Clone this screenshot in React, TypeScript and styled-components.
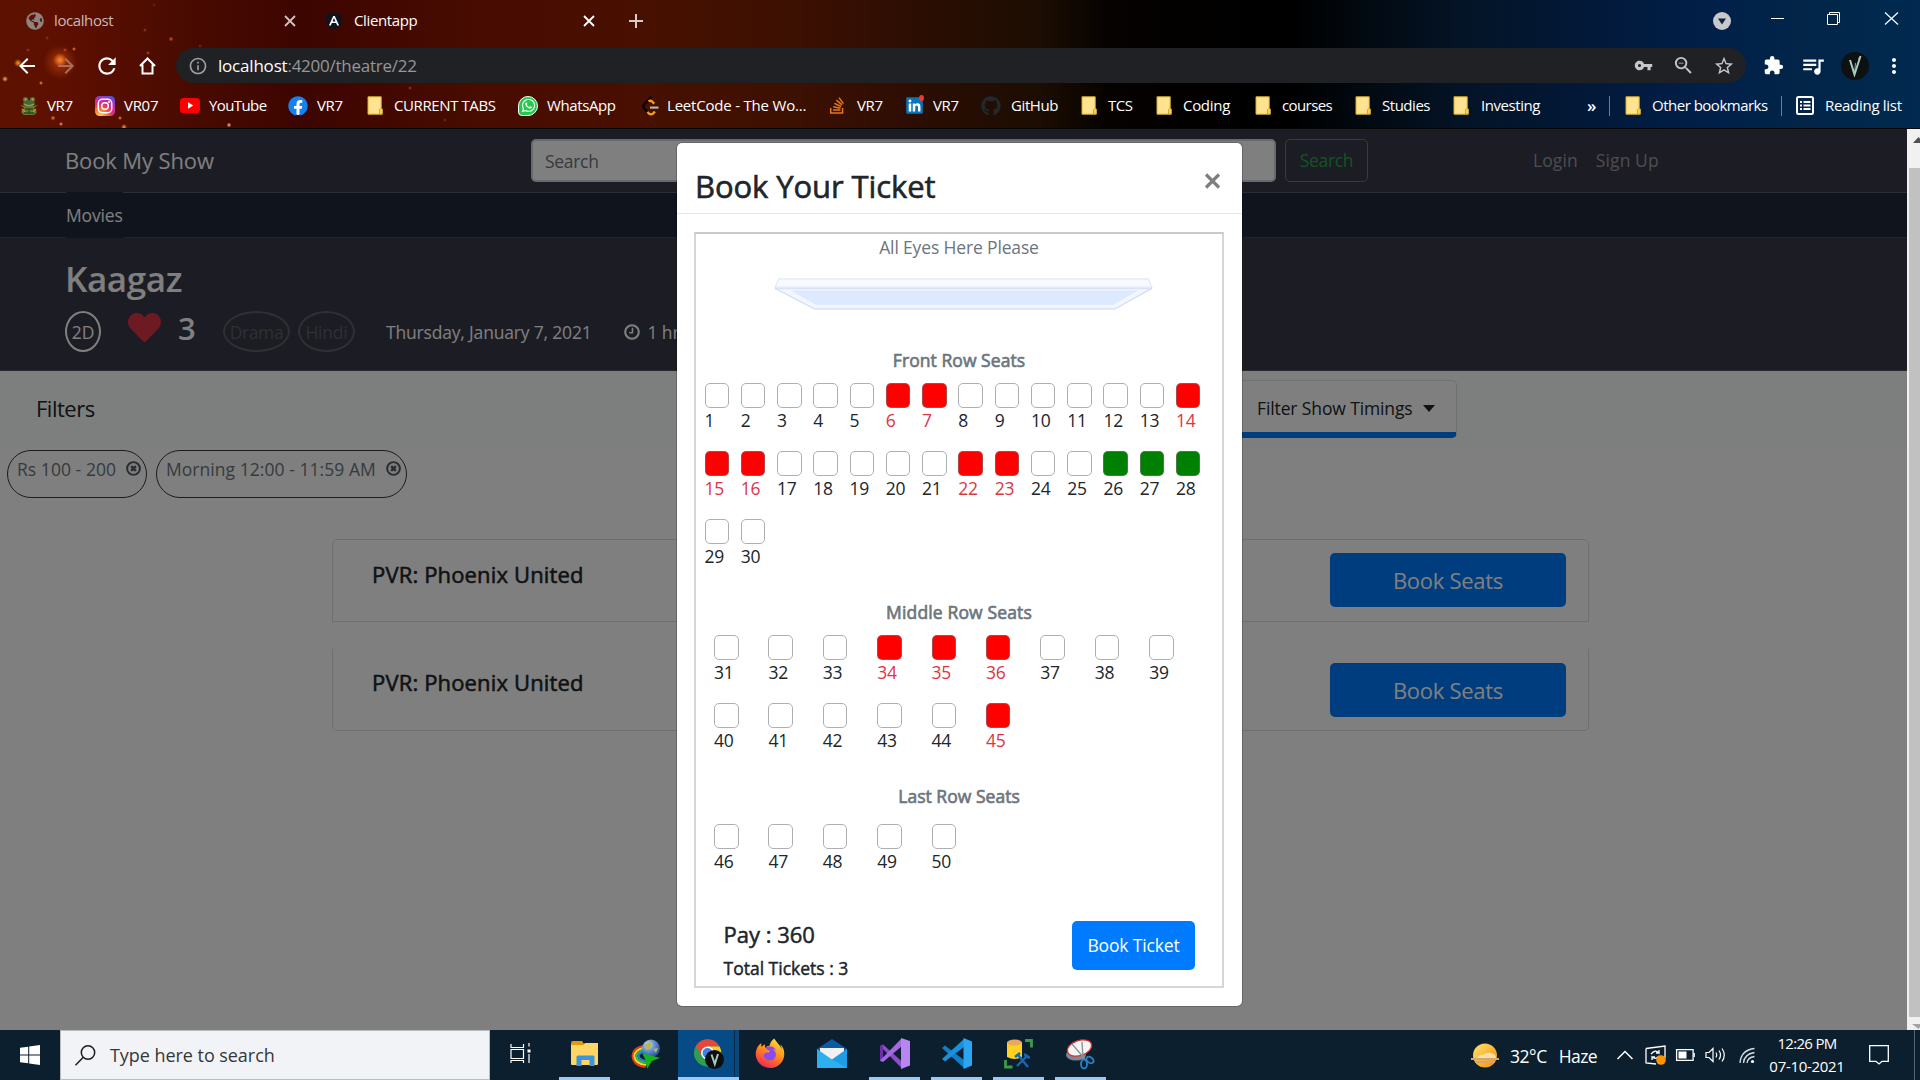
import React from 'react';
import styled, { createGlobalStyle, css } from 'styled-components';
import {
  FaAngular, FaFacebook, FaFirefoxBrowser, FaGithub, FaGlobeAmericas, FaHeart, FaLinkedin, FaStackOverflow, FaWhatsapp,
} from 'react-icons/fa';
import {
  MdArrowBack, MdArrowForward, MdExtension, MdInfoOutline, MdMoreVert, MdQueueMusic, MdRefresh, MdStarBorder, MdVpnKey, MdZoomOut,
} from 'react-icons/md';

const GlobalStyle = createGlobalStyle`
  * { box-sizing: border-box; }
  body { margin: 0; overflow: hidden; background: #000; }
  button { font: inherit; }
`;

const Desktop = styled.div`
  display: flex;
  flex-direction: column;
  width: 1920px;
  height: 1080px;
  font-family: "Open Sans", "Noto Sans", sans-serif;
  line-height: 1;
`;

const Label = styled.span<{ $size?: number; $ls?: number; $color?: string; $medium?: number; $weight?: number }>`
  font-size: ${p => p.$size ?? 17.5}px;
  letter-spacing: ${p => p.$ls ?? -0.15}px;
  color: ${p => p.$color ?? 'inherit'};
  font-weight: ${p => p.$weight ?? 400};
  white-space: nowrap;
  ${p => p.$medium && css`-webkit-text-stroke: ${p.$medium}px currentColor;`}
`;

const Icon = styled.span<{ $w: number; $h?: number; $color?: string; $ml?: number }>`
  display: flex;
  flex: none;
  width: ${p => p.$w}px;
  height: ${p => p.$h ?? p.$w}px;
  margin-left: ${p => p.$ml ?? 0}px;
  color: ${p => p.$color ?? '#fff'};
  > svg { width: 100%; height: 100%; overflow: visible; }
`;

/* ---------- browser window ---------- */

const embers: [number, number, number, string][] = [
  [60, 60, 7, '#ff8a2a'], [60, 62, 17, '#a8330a'], [18, 63, 4, '#ff9a20'], [5, 79, 3, '#ffb050'], [41, 83, 2, '#f0a040'],
  [74, 49, 2, '#f09030'], [65, 50, 2, '#c86020'], [148, 53, 2, '#c05010'], [171, 39, 2.5, '#d06010'], [145, 30, 2, '#a04010'],
  [53, 118, 2.5, '#ff8020'], [61, 124, 2, '#ffb0a0'], [120, 118, 2, '#f0a030'], [124, 127, 3, '#ffa030'], [229, 125, 2.5, '#ffc080'],
  [154, 5, 2, '#7a2008'], [47, 38, 2, '#a03010'], [28, 50, 2, '#a04010'], [200, 46, 2, '#802808'], [410, 88, 2, '#a04010'], [445, 120, 2, '#803010'],
];

const Chrome = styled.header`
  height: 129px;
  flex: none;
  display: flex;
  flex-direction: column;
  border-bottom: 1px solid #060606;
  color: #fff;
  background:
    ${embers.map(([x, y, r, c]) => `radial-gradient(circle at ${x}px ${y}px, ${c} 0, transparent ${r}px)`).join(',')},
    linear-gradient(90deg, #5c1200 0, #5e1000 60px, #4a0b00 180px, #3d0500 300px, #480c00 480px, #481000 640px, #3c1002 800px, #2c0d02 920px, #1c0d02 1040px, #050200 1110px, #000 1290px, #020b14 1380px, #041428 1470px, #02193a 1600px, #01204a 1720px, #022548 1800px, #012a50 1920px);
`;

const TabStrip = styled.div`
  display: flex;
  height: 48px;
`;

const Tab = styled.div<{ $w: number; $active?: boolean }>`
  display: flex;
  align-items: center;
  width: ${p => p.$w}px;
  height: 42px;
  color: ${p => (p.$active ? '#fff' : '#c9b8b4')};
`;

const TabTitle = styled.div`
  flex: 1;
  padding: 0 0 2px 10px;
`;

const Spacer = styled.div`
  flex: 1;
`;

const WindowControls = styled.div`
  display: flex;
  align-items: center;
  height: 42px;
  padding-right: 22px;
`;

const Toolbar = styled.div`
  display: flex;
  align-items: center;
  height: 35px;
  padding-left: 15px;
`;

const Omnibox = styled.div`
  display: flex;
  align-items: center;
  width: 1570px;
  height: 35px;
  margin-left: 20px;
  padding: 0 11px 0 12px;
  border-radius: 18px;
  background: #202124;
`;

const Url = styled.div`
  flex: 1;
  padding-left: 10px;
`;

const Avatar = styled.div`
  display: flex;
  align-items: center;
  justify-content: center;
  width: 28px;
  height: 28px;
  margin-left: 15px;
  border-radius: 50%;
  background: #0e1111;
  > svg { width: 14px; height: 22px; }
`;

const BookmarksBar = styled.nav`
  display: flex;
  align-items: center;
  height: 45px;
  padding-left: 19px;
`;

const Bookmark = styled.div<{ $w: number }>`
  display: flex;
  align-items: center;
  flex: none;
  width: ${p => p.$w}px;
`;

const BookmarkSlot = styled.div<{ $w: number }>`
  flex: none;
  width: ${p => p.$w - 1}px;
`;

const BarDivider = styled.div`
  width: 1px;
  height: 20px;
  margin-right: 15px;
  background: #6d7d92;
`;

const FolderIcon = () => (
  <Icon $w={16} $h={19}>
    <svg viewBox="0 0 16 19">
      <path d="M1 .8h13.2V12l1 1v5.2H1z" fill="#ffe391" stroke="#d9ad2a" strokeWidth="1" />
      <path d="M12.5 18v-4.5l1.5-1.2 1.4 1.2V18z" fill="#fbd25e" stroke="#c99a1c" strokeWidth=".8" />
    </svg>
  </Icon>
);

const FrogIcon = () => (
  <Icon $w={20}>
    <svg viewBox="0 0 20 20">
      <circle cx="6.5" cy="3.6" r="2.6" fill="#5b6f36" /><circle cx="13.5" cy="3.6" r="2.6" fill="#5b6f36" />
      <ellipse cx="10" cy="7.500" rx="6" ry="3.6" fill="#3f6a35" />
      <path d="M1 9l4 3-3 4 3 3h10l3-3-3-4 4-3-5 1H6z" fill="#66782f" />
      <path d="M5 8q5 3 10 0M3 13l3 3M17 13l-3 3" stroke="#c5923a" strokeWidth="1.200" fill="none" />
      <path d="M6 13h8M5 17h10M10 12v6" stroke="#2e4a22" strokeWidth="1.300" />
      <circle cx="6.5" cy="3.4" r="1" fill="#d8b050" /><circle cx="13.5" cy="3.4" r="1" fill="#d8b050" />
    </svg>
  </Icon>
);

const InstagramIcon = () => (
  <Icon $w={20}>
    <svg viewBox="0 0 20 20">
      <defs>
        <radialGradient id="insta" cx=".25" cy="1" r="1.1">
          <stop offset="0" stopColor="#ffd35a" /><stop offset=".3" stopColor="#fb7a2c" />
          <stop offset=".55" stopColor="#e0306e" /><stop offset=".8" stopColor="#b030b8" /><stop offset="1" stopColor="#5b50d8" />
        </radialGradient>
      </defs>
      <rect width="20" height="20" rx="4.5" fill="url(#insta)" />
      <rect x="3.3" y="3.3" width="13.4" height="13.4" rx="4" fill="none" stroke="#fff" strokeWidth="1.5" />
      <circle cx="10" cy="10" r="3.3" fill="none" stroke="#fff" strokeWidth="1.5" />
      <circle cx="14" cy="6" r="1" fill="#fff" />
    </svg>
  </Icon>
);

const YouTubeIcon = () => (
  <Icon $w={20} $h={15}>
    <svg viewBox="0 0 20 15">
      <rect width="20" height="15" rx="3.6" fill="#f00" />
      <path d="M8 4.3v6.4l5.3-3.2z" fill="#fff" />
    </svg>
  </Icon>
);

const WhatsAppBubble = styled(Icon)`
  padding: 1.5px;
  border-radius: 50% 50% 50% 20%;
  background: #25c94c;
  border: 1.5px solid #fff;
`;

const DiscBehind = styled(Icon)`
  border-radius: 50%;
  background: radial-gradient(circle, #fff 60%, transparent 62%);
`;

const ShieldBehind = styled(Icon)`
  background: linear-gradient(#fff, #fff) center / 10px 11px no-repeat;
`;

const SquareBehind = styled(Icon)`
  position: relative;
  background: linear-gradient(#fff, #fff) center / 13px 13px no-repeat;
`;

const Notice = styled.i`
  position: absolute;
  top: -1px;
  right: 0;
  width: 5px;
  height: 6px;
  border-radius: 50%;
  background: #f0382c;
`;

const LeetCodeIcon = () => (
  <Icon $w={18} $h={20} $ml={-3}>
    <svg viewBox="0 0 18 20" fill="none">
      <path d="M10.500 1L3 8.600Q1.600 10.300 3 12l3 3.400" stroke="#0a0502" strokeWidth="2.400" />
      <path d="M7.500 5.300q2-1.300 3.800.4l1.900 1.900M6.500 16l1.500 1.600q2 1.400 4 0l1.900-2" stroke="#f5a01c" strokeWidth="2.300" />
      <path d="M9 11.600h8.500" stroke="#b8b3b0" strokeWidth="2.200" />
    </svg>
  </Icon>
);

const ReadingIcon = () => (
  <Icon $w={18} $h={19} $ml={-1}>
    <svg viewBox="0 0 18 19" fill="none" stroke="#fff">
      <rect x="1" y="1" width="16" height="17" rx="1.500" strokeWidth="2" />
      <path d="M4 6h2M4 9.500h2M4 13h2M7.500 6h7M7.500 9.500h7M7.500 13h7" strokeWidth="1.800" />
    </svg>
  </Icon>
);

type Mark = { text: string; w: number; slot: number; ls: number; icon: React.ReactNode };
const bookmarks: Mark[] = [
  { text: 'VR7', w: 76, slot: 29, ls: -0.4, icon: <FrogIcon /> },
  { text: 'VR07', w: 85, slot: 30, ls: -0.3, icon: <InstagramIcon /> },
  { text: 'YouTube', w: 108, slot: 30, ls: -0.6, icon: <YouTubeIcon /> },
  { text: 'VR7', w: 79, slot: 30, ls: -0.4, icon: <DiscBehind $w={20} $color="#1482f0"><FaFacebook /></DiscBehind> },
  { text: 'CURRENT TABS', w: 151, slot: 28, ls: -0.4, icon: <FolderIcon /> },
  { text: 'WhatsApp', w: 126, slot: 30, ls: -0.4, icon: <WhatsAppBubble $w={20}><FaWhatsapp /></WhatsAppBubble> },
  { text: 'LeetCode - The Wo...', w: 185, slot: 24, ls: -0.2, icon: <LeetCodeIcon /> },
  { text: 'VR7', w: 76, slot: 29, ls: -0.4, icon: <Icon $w={16} $h={19} $color="#e8771e"><FaStackOverflow /></Icon> },
  { text: 'VR7', w: 76, slot: 29, ls: -0.4, icon: <SquareBehind $w={19} $color="#0a74b8"><FaLinkedin /><Notice /></SquareBehind> },
  { text: 'GitHub', w: 100, slot: 31, ls: -0.4, icon: <Icon $w={20} $color="#22282c"><FaGithub /></Icon> },
  { text: 'TCS', w: 75, slot: 28, ls: -0.5, icon: <FolderIcon /> },
  { text: 'Coding', w: 99, slot: 28, ls: -0.3, icon: <FolderIcon /> },
  { text: 'courses', w: 100, slot: 28, ls: -0.6, icon: <FolderIcon /> },
  { text: 'Studies', w: 98, slot: 28, ls: -0.47, icon: <FolderIcon /> },
  { text: 'Investing', w: 134, slot: 29, ls: -0.44, icon: <FolderIcon /> },
];

const CloseCross = () => (
  <svg viewBox="0 0 10 10" stroke="currentColor" strokeWidth="1.800"><path d="M0 0l10 10M10 0L0 10" /></svg>
);

const Browser = () => (
  <Chrome>
    <TabStrip>
      <Icon $w={26} $h={1} />
      <Tab $w={298}>
        <Icon $w={18} $color="#8d8482"><FaGlobeAmericas /></Icon>
        <TabTitle><Label $size={15} $ls={-0.4}>localhost</Label></TabTitle>
        <Icon $w={10} $color="#d0c4c0"><CloseCross /></Icon>
        <Icon $w={29} $h={1} />
      </Tab>
      <Tab $w={305} $active>
        <ShieldBehind $w={20} $color="#0d1420"><FaAngular /></ShieldBehind>
        <TabTitle><Label $size={15} $ls={-0.38}>Clientapp</Label></TabTitle>
        <Icon $w={10}><CloseCross /></Icon>
        <Icon $w={35} $h={1} />
      </Tab>
      <Tab $w={40}>
        <Icon $w={14} $color="#d6cbc8"><svg viewBox="0 0 14 14" stroke="currentColor" strokeWidth="2"><path d="M7 0v14M0 7h14" /></svg></Icon>
      </Tab>
      <Spacer />
      <WindowControls>
        <Icon $w={18}>
          <svg viewBox="0 0 18 18"><circle cx="9" cy="9" r="9" fill="#c7c9cc" /><path d="M5 6.500h8L9 12.500z" fill="#10233c" /></svg>
        </Icon>
        <Icon $w={13} $h={7} $ml={40}><svg viewBox="0 0 13 7" stroke="#fff"><path d="M0 .500h13" /></svg></Icon>
        <Icon $w={13} $h={18} $ml={43}>
          <svg viewBox="0 0 13 18" fill="none" stroke="#fff"><path d="M.5 2.500h10v10H.5zM2.500 2V.500h10v10H11" /></svg>
        </Icon>
        <Icon $w={13} $h={18} $ml={45}><svg viewBox="0 0 13 18" stroke="#fff" strokeWidth="1.200"><path d="M0 .5l13 12M13 .5L0 12.500" /></svg></Icon>
      </WindowControls>
    </TabStrip>
    <Toolbar>
      <Icon $w={24}><MdArrowBack /></Icon>
      <Icon $w={24} $ml={15} $color="#a5715f"><MdArrowForward /></Icon>
      <Icon $w={26} $ml={16}><MdRefresh /></Icon>
      <Icon $w={17} $h={18} $ml={19}>
        <svg viewBox="0 0 17 18" fill="none" stroke="#fff" strokeWidth="2"><path d="M1 9L8.500 1.500 16 9M3.500 7.500V16.500h10V7.500" /></svg>
      </Icon>
      <Omnibox>
        <Icon $w={20} $color="#9b9ea2"><MdInfoOutline /></Icon>
        <Url>
          <Label $size={17} $ls={-0.2}>localhost</Label>
          <Label $size={17} $ls={-0.25} $color="#94979c">:4200/theatre/22</Label>
        </Url>
        <Icon $w={19} $color="#c4c6c9"><MdVpnKey /></Icon>
        <Icon $w={23} $ml={19} $color="#c4c6c9"><MdZoomOut /></Icon>
        <Icon $w={22} $ml={18} $color="#c4c6c9"><MdStarBorder /></Icon>
      </Omnibox>
      <Icon $w={21} $ml={17}><MdExtension /></Icon>
      <Icon $w={26} $ml={16}><MdQueueMusic /></Icon>
      <Avatar>
        <svg viewBox="0 0 14 22" fill="none" stroke="#a9cbc0"><path d="M2 5l4.500 14.500L12.500 1" strokeWidth="2" /><path d="M6.500 19l1-11M10 4l3-2" strokeWidth=".8" /></svg>
      </Avatar>
      <Icon $w={24} $ml={13}><MdMoreVert /></Icon>
    </Toolbar>
    <BookmarksBar>
      {bookmarks.map((b, i) => (
        <Bookmark key={i} $w={b.w}>
          <BookmarkSlot $w={b.slot}>{b.icon}</BookmarkSlot>
          <Label $size={15} $ls={b.ls}>{b.text}</Label>
        </Bookmark>
      ))}
      <Bookmark $w={22}><Label $size={17} $weight={600}>»</Label></Bookmark>
      <BarDivider />
      <Bookmark $w={156}>
        <BookmarkSlot $w={28}><FolderIcon /></BookmarkSlot>
        <Label $size={15} $ls={-0.5}>Other bookmarks</Label>
      </Bookmark>
      <BarDivider />
      <Bookmark $w={120}>
        <BookmarkSlot $w={29}><ReadingIcon /></BookmarkSlot>
        <Label $size={15} $ls={-0.3}>Reading list</Label>
      </Bookmark>
    </BookmarksBar>
  </Chrome>
);

/* ---------- web page ---------- */

const Viewport = styled.main`
  position: relative;
  display: flex;
  height: 901px;
  flex: none;
  background: #fff;
  color: #212529;
`;

const Page = styled.div`
  display: flex;
  flex-direction: column;
  width: 1907px;
`;

const Navbar = styled.div`
  display: flex;
  align-items: center;
  height: 63px;
  padding-left: 65px;
  background: #383848;
  color: #fff;
`;

const Brand = styled.div`
  width: 466px;
  padding-bottom: 2px;
`;

const SearchField = styled.div`
  display: flex;
  align-items: center;
  width: 745px;
  height: 43px;
  padding: 2px 0 0 12px;
  border: 2px solid #ced4da;
  border-radius: 5px;
  background: #fff;
  color: #6c757d;
`;

const SearchButton = styled.button`
  display: flex;
  align-items: center;
  justify-content: center;
  width: 83px;
  height: 43px;
  margin-left: 9px;
  padding: 0;
  border: 1.5px solid #28a745;
  border-radius: 5px;
  background: none;
  color: #28a745;
`;

const AuthLinks = styled.div`
  display: flex;
  gap: 18px;
  padding-left: 165px;
  color: #9b9ba3;
`;

const MenuBar = styled.div`
  display: flex;
  height: 46px;
  padding-left: 66px;
  background: linear-gradient(#5c5b6b, #5c5b6b) top / 100% 1px no-repeat,
    linear-gradient(#45454f, #45454f) bottom / 100% 1px no-repeat, #202838;
  color: #fff;
`;

const MenuItem = styled.div`
  display: flex;
  align-items: center;
  width: 57px;
  padding-top: 2px;
  background: #202838;
`;

const Hero = styled.section`
  display: flex;
  flex-direction: column;
  height: 133px;
  padding: 21px 0 0 65px;
  border-bottom: 1px solid #50505c;
  background: #383848;
  color: #fff;
`;

const Facts = styled.div`
  display: flex;
  align-items: center;
  height: 41px;
  margin-top: 12px;
`;

const MovieTitle = styled.h2`
  height: 40px;
  margin: 0;
  line-height: 40px;
`;

const Oval = styled.div<{ $w: number; $ml?: number; $color: string; $line: string }>`
  display: flex;
  align-items: center;
  justify-content: center;
  flex: none;
  width: ${p => p.$w}px;
  height: 41px;
  padding-top: 3px;
  margin-left: ${p => p.$ml ?? 0}px;
  border: 2px solid ${p => p.$line};
  border-radius: 50%;
  color: ${p => p.$color};
`;

const FactText = styled.div<{ $ml: number; $top?: number }>`
  margin-left: ${p => p.$ml}px;
  padding-top: ${p => p.$top ?? 3}px;
`;

const Likes = styled.div`
  display: flex;
  align-items: center;
  width: 120px;
  height: 41px;
  padding-bottom: 8px;
  margin-left: 27px;
`;

const FilterBand = styled.section`
  display: flex;
  align-items: center;
  height: 76px;
  padding-left: 36px;
  background: #fafefc;
`;

const FilterLabel = styled.div`
  width: 1004px;
  padding-bottom: 2px;
`;

const FilterSelect = styled.div`
  display: flex;
  align-items: center;
  width: 417px;
  height: 58px;
  padding: 4px 23px 0 216px;
  border: 1px solid #dfe3e4;
  border-bottom: 6px solid #007bff;
  border-radius: 5px;
  background: #fff;
`;

const Caret = styled.span`
  margin-left: 10px;
  border: 6px solid transparent;
  border-top: 7px solid #212529;
  border-bottom: 0;
`;

const Chips = styled.div`
  display: flex;
  gap: 9px;
  padding: 3px 0 0 7px;
`;

const Chip = styled.div<{ $w: number }>`
  display: flex;
  justify-content: space-between;
  width: ${p => p.$w}px;
  height: 48px;
  padding: 10px 5px 0 9px;
  border: 1.5px solid #343a40;
  border-radius: 24px;
  color: #6c757d;
`;

const Theatres = styled.div`
  display: flex;
  flex-direction: column;
  gap: 27px;
  width: 1257px;
  margin: 41px 0 0 332px;
`;

const Theatre = styled.div<{ $last?: boolean }>`
  display: flex;
  justify-content: space-between;
  height: ${p => (p.$last ? 82 : 83)}px;
  padding: ${p => (p.$last ? '14px 22px 0 39px' : '13px 22px 0 39px')};
  border: 1px solid #dfdfdf;
  border-top-width: ${p => (p.$last ? 0 : 1)}px;
  border-radius: ${p => (p.$last ? '0 0 5px 5px' : '5px 5px 0 0')};
`;

const TheatreName = styled.div<{ $top: number }>`
  padding-top: ${p => p.$top}px;
`;

const BookSeats = styled.button`
  display: flex;
  align-items: center;
  justify-content: center;
  width: 236px;
  height: 54px;
  border: 0;
  border-radius: 5px;
  background: #007bff;
  color: #fff;
`;

const Backdrop = styled.div`
  position: absolute;
  inset: 0 13px 0 0;
  display: flex;
  align-items: flex-start;
  padding: 14px 0 0 677px;
  background: rgba(0, 0, 0, 0.5);
`;

const Scrollbar = styled.div`
  display: flex;
  flex-direction: column;
  align-items: flex-end;
  width: 13px;
  padding: 8px 0 0 2px;
  background: #f1f1f1;
`;

const ScrollThumb = styled.div`
  width: 11px;
  height: 849px;
  margin: 25px 0 7px;
  background: #c1c1c1;
`;

const RoundMark = ({ kind }: { kind: 'clock' | 'times' }) => (
  <svg viewBox="0 0 16 16" fill="none" stroke="currentColor" strokeWidth="2.100">
    <circle cx="8" cy="8" r="6.800" />
    {kind === 'clock'
      ? <path d="M8.500 3.700v5H5.300" strokeWidth="1.600" />
      : <path d="M5.500 5.500l5 5M10.500 5.500l-5 5" strokeWidth="2.600" />}
  </svg>
);

/* ---------- seat picker ---------- */

const Dialog = styled.div`
  display: flex;
  flex-direction: column;
  width: 565px;
  height: 863px;
  border-radius: 5px;
  background: #fff;
  box-shadow: 0 0 0 1px rgba(0, 0, 0, 0.2);
`;

const DialogHeader = styled.div`
  display: flex;
  justify-content: space-between;
  height: 71px;
  padding: 28px 22px 0 18px;
  border-bottom: 1px solid #e4e8eb;
`;

const Frame = styled.div`
  display: flex;
  flex-direction: column;
  width: 530px;
  height: 756px;
  margin: 18px 0 0 17px;
  border: 2px solid #d6d6d6;
  border-top-color: #cacaca;
`;

const ScreenCaption = styled.div`
  height: 26px;
  line-height: 26px;
  text-align: center;
  color: #6c757d;
`;

const ScreenArt = styled.div`
  display: flex;
  height: 70px;
  padding: 18px 0 0 77px;
`;

const SectionTitle = styled.h5<{ $top: number; $bottom: number }>`
  height: 26px;
  margin: ${p => p.$top}px 0 ${p => p.$bottom}px;
  line-height: 26px;
  text-align: center;
  color: #6c757d;
`;

const SeatGrid = styled.div<{ $cols: number; $pitch: number; $left: number }>`
  display: grid;
  grid-template-columns: repeat(${p => p.$cols}, ${p => p.$pitch}px);
  grid-auto-rows: 68px;
  margin-left: ${p => p.$left}px;
`;

type State = 'free' | 'sold' | 'picked';
const fills: Record<State, string> = { free: '#fff', sold: '#f00', picked: '#008000' };

const Seat = styled.label<{ $state: State }>`
  display: flex;
  flex-direction: column;
  line-height: 24px;
  color: ${p => (p.$state === 'sold' ? '#dc3545' : '#212529')};
  &::before {
    content: '';
    width: 22.5px;
    height: 23px;
    border: 1px solid ${p => (p.$state === 'free' ? '#adb0b2' : 'rgba(120,120,120,.6)')};
    border-radius: 5px;
    background: ${p => fills[p.$state]};
  }
`;

const Checkout = styled.div`
  display: flex;
  justify-content: space-between;
  padding: 29px 26px 0 27.5px;
`;

const Totals = styled.div`
  display: flex;
  flex-direction: column;
`;

const TotalLine = styled.div<{ $h: number; $line: number }>`
  height: ${p => p.$h}px;
  line-height: ${p => p.$line}px;
`;

const BookTicket = styled.button`
  display: flex;
  align-items: center;
  justify-content: center;
  width: 123px;
  height: 49px;
  margin-right: 1px;
  border: 0;
  border-radius: 5px;
  background: #007bff;
  color: #fff;
`;

const sold = new Set([6, 7, 14, 15, 16, 22, 23, 34, 35, 36, 45]);
const picked = new Set([26, 27, 28]);
const stateOf = (n: number): State => (sold.has(n) ? 'sold' : picked.has(n) ? 'picked' : 'free');

const Seats = ({ from, to, cols, pitch, left }: { from: number; to: number; cols: number; pitch: number; left: number }) => (
  <SeatGrid $cols={cols} $pitch={pitch} $left={left}>
    {Array.from({ length: to - from + 1 }, (_, i) => from + i).map(n => (
      <Seat key={n} $state={stateOf(n)}><Label $ls={-0.25}>{n}</Label></Seat>
    ))}
  </SeatGrid>
);

const SeatDialog = () => (
  <Dialog>
    <DialogHeader>
      <Label $size={31} $ls={-0.08} $medium={0.6}>Book Your Ticket</Label>
      <Icon $w={15} $h={26} $color="#7f7f7f">
        <svg viewBox="0 0 15 26" stroke="currentColor" strokeWidth="3.200"><path d="M1 3.500l13 13M14 3.500L1 16.500" /></svg>
      </Icon>
    </DialogHeader>
    <Frame>
      <ScreenCaption><Label>All Eyes Here Please</Label></ScreenCaption>
      <ScreenArt>
        <Icon $w={381} $h={34}>
          <svg viewBox="0 0 381 34">
            <path d="M6 1h369l4 9-37 21H41L2 10z" fill="#f3f7ff" stroke="#dbe3f6" strokeWidth="1.200" />
            <path d="M6 1h369l4 8H2z" fill="#f8faff" stroke="#e0e6f8" />
            <path d="M2 10.500h377" stroke="#dbe2f5" strokeWidth="1.500" />
            <path d="M18 12.500h347l-25 14.500H43z" fill="#dde9ff" />
            <path d="M2 10.500L42 31h300l37-20.500" fill="none" stroke="#d7e0f3" strokeWidth="1.200" />
          </svg>
        </Icon>
      </ScreenArt>
      <SectionTitle $top={17} $bottom={10}><Label $ls={0.06} $medium={0.65}>Front Row Seats</Label></SectionTitle>
      <Seats from={1} to={30} cols={14} pitch={36.27} left={8.5} />
      <SectionTitle $top={12} $bottom={10}><Label $ls={0.14} $medium={0.65}>Middle Row Seats</Label></SectionTitle>
      <Seats from={31} to={45} cols={9} pitch={54.4} left={18} />
      <SectionTitle $top={12} $bottom={15}><Label $ls={0.03} $medium={0.65}>Last Row Seats</Label></SectionTitle>
      <Seats from={46} to={50} cols={9} pitch={54.4} left={18} />
      <Checkout>
        <Totals>
          <TotalLine $h={35} $line={26}><Label $size={22} $ls={0} $medium={0.5}>Pay : 360</Label></TotalLine>
          <TotalLine $h={28} $line={24}><Label $ls={0} $medium={0.45}>Total Tickets : 3</Label></TotalLine>
        </Totals>
        <BookTicket><Label>Book Ticket</Label></BookTicket>
      </Checkout>
    </Frame>
  </Dialog>
);

const WebPage = () => (
  <Viewport>
    <Page>
      <Navbar>
        <Brand><Label $size={22} $ls={-0.12}>Book My Show</Label></Brand>
        <SearchField><Label $ls={-0.3}>Search</Label></SearchField>
        <SearchButton><Label $ls={-0.35}>Search</Label></SearchButton>
        <AuthLinks><Label $ls={0.1}>Login</Label><Label $ls={0.1}>Sign Up</Label></AuthLinks>
      </Navbar>
      <MenuBar><MenuItem><Label>Movies</Label></MenuItem></MenuBar>
      <Hero>
        <MovieTitle><Label $size={35} $ls={-0.4} $weight={600}>Kaagaz</Label></MovieTitle>
        <Facts>
          <Oval $w={36} $color="#fff" $line="#fff"><Label>2D</Label></Oval>
          <Likes>
            <Icon $w={33} $h={33} $color="#dc3545"><FaHeart /></Icon>
            <FactText $ml={17} $top={1}><Label $size={31} $weight={600}>3</Label></FactText>
          </Likes>
          <Oval $w={67} $ml={-25} $color="#5c6067" $line="#5c6067"><Label $ls={-0.4}>Drama</Label></Oval>
          <Oval $w={57} $ml={8} $color="#5c6067" $line="#5c6067"><Label $ls={-0.2}>Hindi</Label></Oval>
          <FactText $ml={31}><Label $ls={-0.18}>Thursday, January 7, 2021</Label></FactText>
          <Icon $w={16} $ml={32}><RoundMark kind="clock" /></Icon>
          <FactText $ml={8}><Label>1 hr 49 mins</Label></FactText>
        </Facts>
      </Hero>
      <FilterBand>
        <FilterLabel><Label $size={22} $ls={-0.5}>Filters</Label></FilterLabel>
        <FilterSelect><Label $ls={-0.12}>Filter Show Timings</Label><Caret /></FilterSelect>
      </FilterBand>
      <Chips>
        <Chip $w={140}><Label $ls={0.05}>Rs 100 - 200</Label><Icon $w={15} $color="#555b60"><RoundMark kind="times" /></Icon></Chip>
        <Chip $w={251}><Label $ls={0.05}>Morning 12:00 - 11:59 AM</Label><Icon $w={15} $color="#555b60"><RoundMark kind="times" /></Icon></Chip>
      </Chips>
      <Theatres>
        {[false, true].map(last => (
          <Theatre key={String(last)} $last={last}>
            <TheatreName $top={last ? 8 : 10}><Label $size={22} $ls={0.15} $medium={0.55}>PVR: Phoenix United</Label></TheatreName>
            <BookSeats><Label $size={22} $ls={-0.28}>Book Seats</Label></BookSeats>
          </Theatre>
        ))}
      </Theatres>
    </Page>
    <Scrollbar>
      <Icon $w={7} $h={6}><svg viewBox="0 0 7 6"><path d="M0 6L5.500 0 7 1.500V6z" fill="#505050" /></svg></Icon>
      <ScrollThumb />
      <Icon $w={8} $h={5}><svg viewBox="0 0 8 5"><path d="M0 0h8v3L6.500 5z" fill="#a3a3a3" /></svg></Icon>
    </Scrollbar>
    <Backdrop><SeatDialog /></Backdrop>
  </Viewport>
);

/* ---------- taskbar ---------- */

const Taskbar = styled.footer`
  display: flex;
  height: 50px;
  flex: none;
  background: #0c1f2e;
  color: #fff;
`;

const StartButton = styled.div`
  display: flex;
  align-items: center;
  justify-content: center;
  width: 60px;
`;

const TaskSearch = styled.div`
  display: flex;
  align-items: center;
  width: 430px;
  padding-left: 14px;
  border: 1px solid #b9bcbf;
  background: #f2f3f6;
  color: #33373b;
`;

const TaskButton = styled.div<{ $w: number; $bar?: boolean; $active?: boolean }>`
  display: flex;
  align-items: center;
  justify-content: center;
  width: ${p => p.$w}px;
  border-bottom: 3px solid ${p => (p.$bar ? '#9cc8f4' : 'transparent')};
  ${p => p.$active && css`background: linear-gradient(90deg, #064b85 91%, #04294a 91%, #04294a 93%, #0b4778 93%) padding-box;`}
`;

const TaskGap = styled.div<{ $w: number }>`
  width: ${p => p.$w}px;
`;

const Firefox = styled(Icon)`
  background: radial-gradient(circle at 50% 50%, #8a4af0 0 7px, transparent 8px);
  > svg { fill: url(#fox); }
`;

const GradientDefs = styled.svg`
  position: absolute;
  width: 0;
  height: 0;
`;

const Tray = styled.div`
  display: flex;
  align-items: center;
  margin-left: auto;
  padding-right: 5px;
`;

const Weather = styled.div`
  display: flex;
  align-items: center;
  width: 145px;
`;

const Clock = styled.div`
  display: flex;
  flex-direction: column;
  align-items: center;
  gap: 8px;
  width: 76px;
  margin-left: 14px;
`;

const Edge = styled.div`
  width: 1px;
  height: 50px;
  margin-left: 25px;
  background: #55636e;
`;

const Desk = () => (
  <Taskbar>
    <GradientDefs>
      <defs><linearGradient id="fox" x1=".8" y1="0" x2=".3" y2="1"><stop offset="0" stopColor="#ffe23a" /><stop offset=".5" stopColor="#ff8a1e" /><stop offset="1" stopColor="#f2235a" /></linearGradient></defs>
    </GradientDefs>
    <StartButton>
      <Icon $w={20}><svg viewBox="0 0 20 20" fill="#fff"><path d="M0 2.800l8.200-1.100v7.800H0zM9.200 1.500L20 0v9.500H9.200zM0 10.500h8.200v7.800L0 17.200zM9.200 10.500H20V20L9.200 18.500z" /></svg></Icon>
    </StartButton>
    <TaskSearch>
      <Icon $w={21} $color="#1b1b1b">
        <svg viewBox="0 0 21 21" fill="none" stroke="currentColor" strokeWidth="1.500"><circle cx="13" cy="7.500" r="6.700" /><path d="M8.300 12.300L.5 20.300" /></svg>
      </Icon>
      <FactText $ml={14} $top={0}><Label $size={18} $ls={-0.05}>Type here to search</Label></FactText>
    </TaskSearch>
    <TaskButton $w={60}>
      <Icon $w={21}>
        <svg viewBox="0 0 21 21" fill="none" stroke="#fff" strokeWidth="1.200"><path d="M1 1v3.500h12.500V1M1 6.500h12.500v9H1zM1 20v-2.500h12.500V20M19 0v3.500M19 11v9" /><path d="M19 6.500v3" strokeWidth="3" /></svg>
      </Icon>
    </TaskButton>
    <TaskGap $w={9} />
    <TaskButton $w={51} $bar>
      <Icon $w={29} $h={25}>
        <svg viewBox="0 0 29 25"><path d="M1 2q0-2 2-2h9l2 3v4H1z" fill="#e09a0c" /><path d="M1 4h12l2-2h13v21q0 1-1 1H2q-1 0-1-1z" fill="#ffd567" /><path d="M6.500 25v-9q0-1.500 1.500-1.500h15q1.500 0 1.500 1.500v9h-5v-6h-8v6z" fill="#3a95dc" /></svg>
      </Icon>
    </TaskButton>
    <TaskGap $w={10} />
    <TaskButton $w={51}>
      <Icon $w={30}>
        <svg viewBox="0 0 30 30" fill="none">
          <defs><radialGradient id="earth" cx=".35" cy=".3" r=".8"><stop offset="0" stopColor="#e6ecc0" /><stop offset=".4" stopColor="#6d97ce" /><stop offset="1" stopColor="#173f94" /></radialGradient></defs>
          <ellipse cx="11" cy="19" rx="9" ry="8" fill="#0c1f2e" />
          <path d="M12 7Q2 9 1.500 17q1 10 13 11" stroke="#e83a20" strokeWidth="2" /><path d="M12.500 8.800Q4 11 3.300 17q1 8 12 9" stroke="#ffd42a" strokeWidth="2.200" />
          <path d="M13 10.800Q6 13 5.300 17q1 6 11 7" stroke="#35b845" strokeWidth="2.200" /><path d="M13.500 12.500Q8 14 7.500 17q1 4 8 5" stroke="#2b78e0" strokeWidth="2" />
          <circle cx="20" cy="9.500" r="9" fill="url(#earth)" /><path d="M14 6q4-4 7-2l-2 5-4 2zM22 10l5-1-2 5z" fill="#b9b65a" />
          <path d="M11 14l18 5-8 3-5 8-1-8z" fill="#12b51c" />
        </svg>
      </Icon>
    </TaskButton>
    <TaskGap $w={7} />
    <TaskButton $w={61} $bar $active>
      <Icon $w={31}>
        <svg viewBox="0 0 31 31">
          <circle cx="14.500" cy="15" r="13.500" fill="#2f9e50" /><path d="M2.800 8.200A13.500 13.500 0 0 1 26.500 8.500H14.500l-6 8.500z" fill="#e2483c" /><path d="M26.500 8.500A13.500 13.500 0 0 1 14 28.500l6.500-11-6-9z" fill="#fbc62c" />
          <circle cx="14.500" cy="15" r="6.500" fill="#fff" /><circle cx="14.500" cy="15" r="5" fill="#3e80ee" />
          <circle cx="21.500" cy="21.500" r="9.500" fill="#0b0f0f" /><path d="M18.500 16.500l3.300 9.500 3.200-10" fill="none" stroke="#a9c9c0" strokeWidth="2" />
        </svg>
      </Icon>
    </TaskButton>
    <TaskGap $w={5} />
    <TaskButton $w={51}><Firefox $w={30} $h={31}><FaFirefoxBrowser /></Firefox></TaskButton>
    <TaskGap $w={11} />
    <TaskButton $w={51}>
      <Icon $w={30} $h={29}>
        <svg viewBox="0 0 30 29"><path d="M0 10L15 0l15 10v4H0z" fill="#0c59a6" /><path d="M3 9h24v12H3z" fill="#f1f1f1" /><path d="M0 10l15 10.500L30 10v19H0z" fill="#2fb0ee" /><path d="M15 20.500L30 10v19z" fill="#1490df" opacity=".6" /></svg>
      </Icon>
    </TaskButton>
    <TaskGap $w={12} />
    <TaskButton $w={51} $bar>
      <Icon $w={30} $h={31}>
        <svg viewBox="0 0 30 31"><path d="M0 8l3-1.500 19 17-1 6z" fill="#8a4fc6" /><path d="M0 8l3-1.500V24L0 22.500z" fill="#6b2fa8" /><path d="M3 24l-3-1.500L21 1l1 7z" fill="#a468e0" /><path d="M21 0l9 3v24.500L21 31z" fill="#b886f2" /></svg>
      </Icon>
    </TaskButton>
    <TaskGap $w={11} />
    <TaskButton $w={51} $bar>
      <Icon $w={30} $h={31}>
        <svg viewBox="0 0 30 31"><path d="M0 10l3-2.500 19 14.500v8z" fill="#0f7fc8" /><path d="M0 21l3 2.500L22 9V1z" fill="#1a90dc" /><path d="M21.500 0L30 3.500v24L21.500 31z" fill="#2ba5f2" /></svg>
      </Icon>
    </TaskButton>
    <TaskGap $w={11} />
    <TaskButton $w={51} $bar>
      <Icon $w={29} $h={30}>
        <svg viewBox="0 0 29 30" fill="none">
          <path d="M3 3h15v15q-7 4-15 0z" fill="#ffd21f" /><ellipse cx="10.500" cy="3.500" rx="7.500" ry="3" fill="#e8a860" />
          <path d="M21 1.500h6.500v7M1.500 21v7h7" stroke="#3f9a48" strokeWidth="2.800" />
          <path d="M14 16l10 12M24 16L13 27" stroke="#1568b5" strokeWidth="2.400" /><path d="M11 18l5-4M21 14.500q0 4 5 4" stroke="#1568b5" strokeWidth="2.600" />
        </svg>
      </Icon>
    </TaskButton>
    <TaskGap $w={11} />
    <TaskButton $w={51} $bar>
      <Icon $w={29} $h={30}>
        <svg viewBox="0 0 29 30" fill="none">
          <ellipse cx="10" cy="16" rx="10" ry="5.500" fill="#7f8890" /><ellipse cx="13.500" cy="9" rx="12.500" ry="7.500" transform="rotate(-18 13.500 9)" fill="#f5f5f5" stroke="#d83030" strokeWidth="1.300" />
          <path d="M6 5l13 15M16 3l1 17" stroke="#8c9298" strokeWidth="1.400" />
          <ellipse cx="18" cy="25" rx="3" ry="4.500" stroke="#2481c9" strokeWidth="1.900" /><ellipse cx="24" cy="21" rx="4" ry="2.800" transform="rotate(35 24 21)" stroke="#2481c9" strokeWidth="1.900" />
        </svg>
      </Icon>
    </TaskButton>
    <Tray>
      <Weather>
        <Icon $w={26} $h={25}>
          <svg viewBox="0 0 26 25">
            <defs><linearGradient id="sun" x1="0" y1="0" x2="1" y2="1"><stop offset="0" stopColor="#ffe36a" /><stop offset="1" stopColor="#f58d0c" /></linearGradient></defs>
            <circle cx="13" cy="12.500" r="12" fill="url(#sun)" /><path d="M5 15q2-4 6-3 3-3 8-2 5 1 5 5z" fill="#fbdfa8" /><path d="M-1 16h28M3 19h20" stroke="#d3a774" strokeWidth="1.800" />
          </svg>
        </Icon>
        <FactText $ml={12}><Label $size={17.5} $ls={-0.45}>32°C</Label></FactText>
        <FactText $ml={12}><Label $size={17.5} $ls={-0.6}>Haze</Label></FactText>
      </Weather>
      <Icon $w={16} $h={10}><svg viewBox="0 0 16 10" fill="none" stroke="#fff" strokeWidth="1.500"><path d="M.5 9L8 1.500 15.500 9" /></svg></Icon>
      <Icon $w={21} $h={20} $ml={12}>
        <svg viewBox="0 0 21 20" fill="none" stroke="#fff" strokeWidth="1.300"><path d="M1 3.500L20 1v12M1 3.500V18l10 1" /><path d="M6 9q4-5 8-1V5M14 8h-3M14 11q-3 4-7 1v3M7 12h3" /><circle cx="16" cy="15" r="4.800" fill="#ff9500" stroke="none" /></svg>
      </Icon>
      <Icon $w={19} $h={12} $ml={10}>
        <svg viewBox="0 0 19 12" fill="none" stroke="#fff" strokeWidth="1.300"><path d="M.6.600h16.500v10.800H.6z" /><path d="M18.200 4v4" /><path d="M2.500 2.500h8v7h-8z" fill="#fff" stroke="none" /></svg>
      </Icon>
      <Icon $w={22} $h={18} $ml={10}>
        <svg viewBox="0 0 22 18" fill="none" stroke="#fff" strokeWidth="1.200"><path d="M1 6.500h3l4-4v13l-4-4H1zM11 6.500q1.500 2.500 0 5M14 4.500q3 4.500 0 9M17 2.500q4.500 6.500 0 13" /></svg>
      </Icon>
      <Icon $w={16} $h={17} $ml={12}>
        <svg viewBox="0 0 16 17" fill="none" stroke="#d8dde1" strokeWidth="1.300"><path d="M1 16Q2 3 15.500 1.500M4.500 16Q5 7 15.500 5.500M8 16q.5-5.500 7.500-6.500" /><circle cx="13.500" cy="14.500" r="1.600" fill="#fff" stroke="none" /></svg>
      </Icon>
      <Clock>
        <Label $size={15} $ls={-0.7}>12:26 PM</Label>
        <Label $size={15} $ls={-0.3}>07-10-2021</Label>
      </Clock>
      <Icon $w={20} $h={20} $ml={24}>
        <svg viewBox="0 0 20 20" fill="none" stroke="#fff" strokeWidth="1.300"><path d="M.7.700h18.600v15.600H13L10 19l-3-2.700H.7z" /></svg>
      </Icon>
      <Edge />
    </Tray>
  </Taskbar>
);

export default function App() {
  return (
    <Desktop>
      <GlobalStyle />
      <Browser />
      <WebPage />
      <Desk />
    </Desktop>
  );
}
